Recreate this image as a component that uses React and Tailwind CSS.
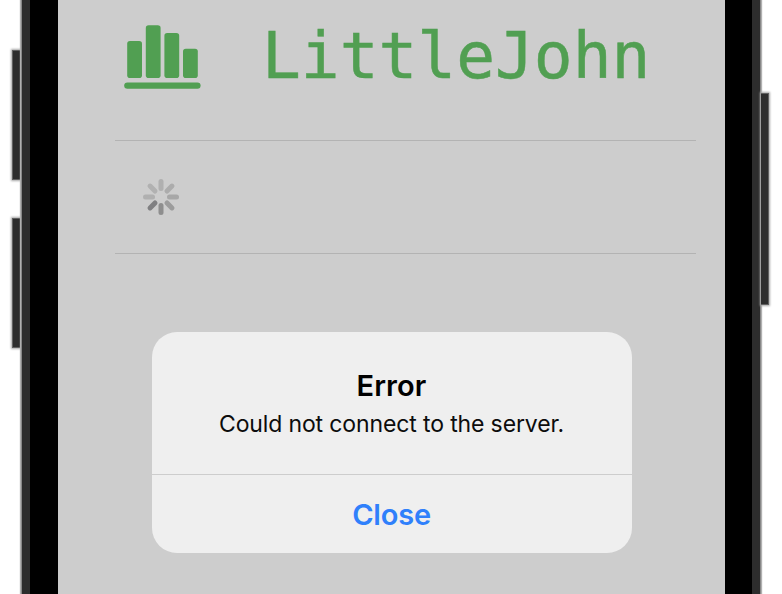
const spokes = [
  { angle: 0, color: '#b0b0b0' },
  { angle: 45, color: '#acacac' },
  { angle: 90, color: '#a7a7a7' },
  { angle: 135, color: '#9c9c9c' },
  { angle: 180, color: '#8e8e8e' },
  { angle: 225, color: '#808082' },
  { angle: 270, color: '#b0b0b0' },
  { angle: 315, color: '#b1b1b1' },
];

function Spinner() {
  return (
    <svg width="38" height="38" viewBox="-19 -19 38 38" role="img" aria-label="Loading">
      {spokes.map(({ angle, color }) => (
        <rect key={angle} x="-2.5" y="-18" width="5" height="12" rx="2.5" fill={color} transform={`rotate(${angle})`} />
      ))}
    </svg>
  );
}

function ChartIcon() {
  return (
    <svg className="shrink-0" width="77" height="64" viewBox="0 0 77 64" fill="#519f52">
      <rect x="3.2" y="16" width="14.8" height="37" rx="2.8" />
      <rect x="21.8" y="0.2" width="14.8" height="52.8" rx="2.8" />
      <rect x="40.4" y="8" width="14.8" height="45" rx="2.8" />
      <rect x="59" y="23.7" width="14.8" height="29.3" rx="2.8" />
      <rect x="0.2" y="57.4" width="76.4" height="6.4" rx="3.2" />
    </svg>
  );
}

function SideButton({ className }) {
  return <div className={`border-y border-[#606060] bg-[#2d2d2d] shadow-[0_0_2px_1px_#a8a8a8] ${className}`} />;
}

function Alert() {
  return (
    <div className="mx-auto mt-[78px] flex h-[221px] w-[480px] flex-col overflow-hidden rounded-[25px] bg-[#efefef] text-center font-['Inter',sans-serif]">
      <div className="h-[143px] border-b border-[#cdcdcd] pt-[36px]">
        <h2 className="text-[29px] leading-[36px] font-semibold tracking-[0.1px] text-black">Error</h2>
        <p className="mt-[5px] text-[23px] leading-[30px] tracking-[-0.13px] text-[#0c0c0c]">Could not connect to the server.</p>
      </div>
      <button className="flex-1 pt-[2px] text-[29px] leading-[36px] font-semibold tracking-[-0.2px] text-[#2f80fb]">Close</button>
    </div>
  );
}

export default function App() {
  return (
    <div className="flex h-[594px] w-[782px] overflow-hidden bg-white">
      <div className="flex w-[21px] flex-col items-end pt-[50px]">
        <SideButton className="h-[130px] w-[9px] border-l" />
        <SideButton className="mt-[38px] h-[130px] w-[9px] border-l" />
      </div>
      <div className="w-[9px] border-l border-[#888888] bg-[#2d2d2d] shadow-[-1px_0_1px_#b0b0b0]" />
      <div className="w-[28px] bg-black" />
      <main className="w-[667px] bg-[#cdcdcd]">
        <header className="ml-[66px] flex h-[115px] items-start pt-[25px]">
          <ChartIcon />
          <h1 className="mt-[-1px] ml-[61px] text-[64.5px] leading-[64px] whitespace-nowrap text-[#519f52] font-['DejaVu_Sans_Mono',monospace] [-webkit-text-stroke:0.5px_#519f52]">LittleJohn</h1>
        </header>
        <div className="mt-[25px] ml-[57px] flex h-[114px] w-[581px] items-center border-y border-[#b3b3b3] pl-[27px]">
          <Spinner />
        </div>
        <Alert />
      </main>
      <div className="w-[27px] bg-black" />
      <div className="w-[9px] border-r border-[#888888] bg-[#2d2d2d] shadow-[1px_0_1px_#b0b0b0]" />
      <div className="pt-[93px]">
        <SideButton className="h-[212px] w-[8px] border-r" />
      </div>
    </div>
  );
}
